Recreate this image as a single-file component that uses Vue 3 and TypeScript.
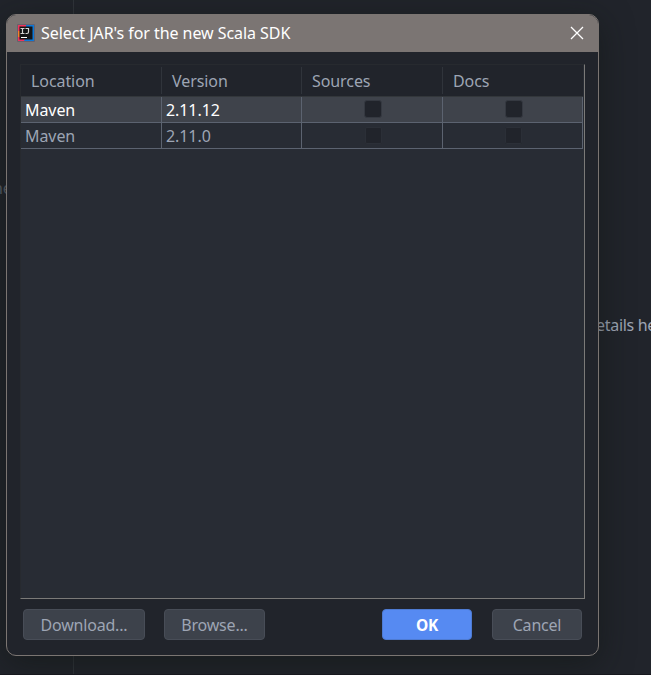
<script setup lang="ts">
import { ref } from 'vue'

interface SdkRow {
  location: string
  version: string
  sources: boolean
  docs: boolean
}

const columns: string[] = ['Location', 'Version', 'Sources', 'Docs']
const rows: SdkRow[] = [
  { location: 'Maven', version: '2.11.12', sources: false, docs: false },
  { location: 'Maven', version: '2.11.0', sources: false, docs: false },
]
const selected = ref(0)
</script>

<template>
  <div class="desktop">
    <div class="rail"></div>
    <span class="behind behind-left">ne</span>
    <span class="behind behind-right">etails he</span>

    <section class="dialog">
      <header class="titlebar">
        <svg class="logo" width="18" height="18" viewBox="0 0 18 18">
          <rect x="0" y="0" width="18" height="18" rx="1" fill="#68616a" />
          <path d="M1 1H10L5 9L1 8Z" fill="#f0345c" />
          <path d="M1 7H5V14H1Z" fill="#f5812a" />
          <path d="M1 13H8V17H1Z" fill="#ee315c" />
          <path d="M9 1H17V17H7L9 13Z" fill="#0c78d8" />
          <rect x="2.5" y="2.5" width="13" height="13" fill="#141416" />
          <path d="M3.5 4.5H7.5M5.5 4.5V9.5M3.5 9.5H7.5M8.5 4.5H11.5V8Q11.5 9.5 10 9.5H8.5" fill="none" stroke="#d4d4d4" stroke-width="1.2" />
          <path d="M4 13.5H10" stroke="#fff" stroke-width="1" />
        </svg>
        <span class="title">Select JAR's for the new Scala SDK</span>
        <svg class="close" width="14" height="14" viewBox="0 0 14 14">
          <path d="M1 1L13 13M13 1L1 13" fill="none" stroke="#fff" stroke-width="1.3" />
        </svg>
      </header>

      <main class="table">
        <div class="head">
          <div v-for="c in columns" :key="c" class="th">{{ c }}</div>
        </div>
        <div
          v-for="(r, i) in rows"
          :key="i"
          class="row"
          :class="{ selected: selected === i }"
          @click="selected = i"
        >
          <div class="td">{{ r.location }}</div>
          <div class="td">{{ r.version }}</div>
          <div class="td center"><i class="check"></i></div>
          <div class="td center"><i class="check"></i></div>
        </div>
      </main>

      <footer class="actions">
        <button class="download">Download...</button>
        <button class="browse">Browse...</button>
        <button class="ok">OK</button>
        <button class="cancel">Cancel</button>
      </footer>
    </section>
  </div>
</template>

<style>
body {
  margin: 0;
  background: #21252b;
}
</style>

<style scoped>
.desktop {
  position: relative;
  box-sizing: border-box;
  width: 651px;
  height: 675px;
  padding: 14px 0 0 6px;
  overflow: hidden;
  background: #21242b;
  border-bottom: 1px solid #17181e;
  font-family: "Noto Sans", "Open Sans", sans-serif;
  font-size: 16px;
  letter-spacing: -0.08px;
  color: #9da5b4;
}
.rail {
  position: absolute;
  left: 73px;
  top: 0;
  width: 1px;
  height: 674px;
  background: #30343a;
}
.behind {
  position: absolute;
  line-height: 20px;
  white-space: nowrap;
}
.behind-left {
  left: -7px;
  top: 178px;
  color: #59606c;
}
.behind-right {
  left: 596px;
  top: 315px;
  letter-spacing: -0.3px;
}
.dialog {
  position: relative;
  box-sizing: border-box;
  width: 593px;
  height: 642px;
  border: 1px solid #7b7572;
  border-radius: 10px;
  overflow: hidden;
  background: #21242b;
  display: flex;
  flex-direction: column;
  box-shadow: 0 8px 32px rgba(16, 22, 18, 0.55);
}
.titlebar {
  box-sizing: border-box;
  flex: none;
  display: flex;
  align-items: center;
  height: 37px;
  padding: 0 14px 1px 10px;
  background: #7b7573;
  color: #fff;
}
.logo {
  margin-right: 6px;
}
.title {
  line-height: 20px;
  letter-spacing: -0.06px;
  white-space: nowrap;
}
.close {
  margin-left: auto;
}
.table {
  box-sizing: border-box;
  flex: none;
  width: 565px;
  height: 535px;
  margin: 12px 0 0 13px;
  padding-right: 1px;
  border: 1px solid #272a2f;
  border-right-color: #7b7a78;
  border-bottom-color: #7b7a78;
  background: #282c34;
}
.head,
.row {
  display: grid;
  grid-template-columns: 141px 140px 141px 140px;
}
.head {
  height: 32px;
  padding-top: 1px;
  box-sizing: border-box;
  background: #21242b;
  border-bottom: 1px solid #33373b;
}
.th {
  box-sizing: border-box;
  height: 27px;
  margin-top: 1px;
  padding: 0 0 0 10px;
  line-height: 29px;
  border-right: 1px solid #30343b;
}
.th:last-child {
  border-right: 0;
}
.row {
  box-sizing: border-box;
  height: 26px;
}
.td {
  display: flex;
  align-items: center;
  box-sizing: border-box;
  height: 26px;
  padding: 2px 0 0 4px;
  line-height: 23px;
  border-right: 1px solid #5c6370;
  border-bottom: 1px solid #5c6370;
}
.td.center {
  justify-content: center;
  padding: 0 0 0 2px;
}
.selected .td {
  background: #3f434b;
  color: #fff;
}
.check {
  box-sizing: border-box;
  width: 17px;
  height: 17px;
  margin-bottom: 1px;
  border: 1px solid #2b2f37;
  border-radius: 2px;
  background: #21242b;
}
.selected .check {
  width: 18px;
  height: 18px;
  border-color: #353941;
  border-radius: 3px;
}
.actions {
  display: flex;
  padding: 10px 16px 0;
}
button {
  box-sizing: border-box;
  height: 31px;
  padding: 1px 0 0;
  border: 1px solid #484d57;
  border-radius: 4px;
  background: #3d424b;
  color: #9da5b4;
  font: inherit;
  letter-spacing: -0.2px;
  line-height: 28px;
  white-space: nowrap;
}
.download {
  width: 122px;
}
.browse {
  width: 101px;
  margin-left: 19px;
}
.ok {
  width: 90px;
  margin-left: auto;
  background: #568af2;
  border-color: #4e7bd2;
  color: #fff;
  font-size: 15.5px;
  font-weight: 700;
}
.cancel {
  width: 90px;
  margin-left: 20px;
}
</style>
